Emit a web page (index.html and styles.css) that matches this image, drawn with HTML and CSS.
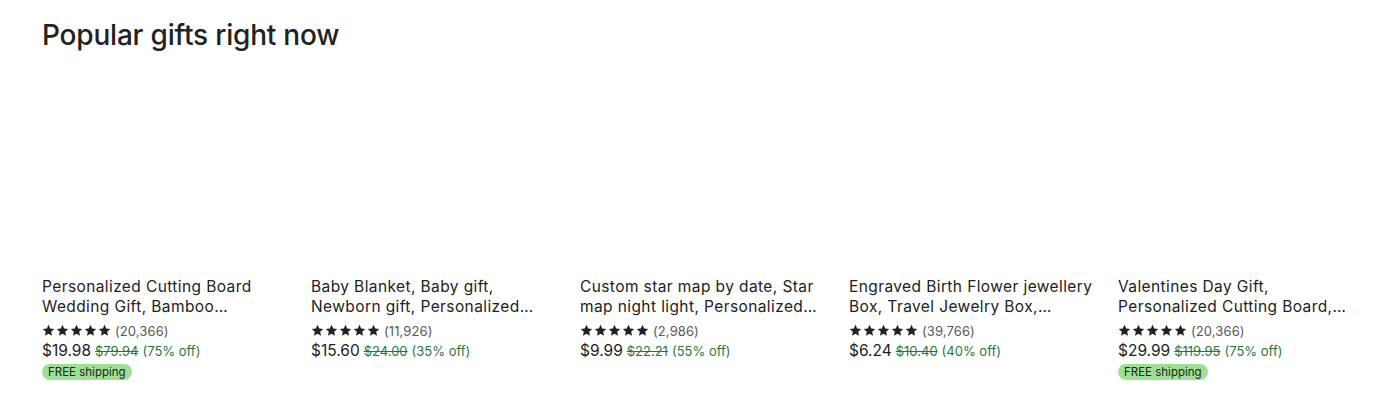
FILE: index.html
```html
<!DOCTYPE html>
<html>
<head>
<meta charset="utf-8">
<link rel="stylesheet" href="styles.css">
</head>
<body>
<section class="section">
  <h2 class="heading">Popular gifts right now</h2>
  <div class="grid">
    <div class="card">
      <div class="thumb"></div>
      <p class="title">Personalized Cutting Board Wedding Gift, Bamboo Charcuterie Board, Custom</p>
      <div class="rating"><span class="stars"><svg viewBox="0 0 24 24"><polygon points="12,1.5 15.1,8.3 22.5,9.1 17,14.1 18.5,21.5 12,17.8 5.5,21.5 7,14.1 1.5,9.1 8.9,8.3"/></svg><svg viewBox="0 0 24 24"><polygon points="12,1.5 15.1,8.3 22.5,9.1 17,14.1 18.5,21.5 12,17.8 5.5,21.5 7,14.1 1.5,9.1 8.9,8.3"/></svg><svg viewBox="0 0 24 24"><polygon points="12,1.5 15.1,8.3 22.5,9.1 17,14.1 18.5,21.5 12,17.8 5.5,21.5 7,14.1 1.5,9.1 8.9,8.3"/></svg><svg viewBox="0 0 24 24"><polygon points="12,1.5 15.1,8.3 22.5,9.1 17,14.1 18.5,21.5 12,17.8 5.5,21.5 7,14.1 1.5,9.1 8.9,8.3"/></svg><svg viewBox="0 0 24 24"><polygon points="12,1.5 15.1,8.3 22.5,9.1 17,14.1 18.5,21.5 12,17.8 5.5,21.5 7,14.1 1.5,9.1 8.9,8.3"/></svg></span><span class="count">(20,366)</span></div>
      <div class="price"><span class="now">$19.98</span><span class="was">$79.94</span><span class="off">(75% off)</span></div>
      <span class="badge">FREE shipping</span>
    </div>
    <div class="card">
      <div class="thumb"></div>
      <p class="title">Baby Blanket, Baby gift, Newborn gift, Personalized Baby Blanket</p>
      <div class="rating"><span class="stars"><svg viewBox="0 0 24 24"><polygon points="12,1.5 15.1,8.3 22.5,9.1 17,14.1 18.5,21.5 12,17.8 5.5,21.5 7,14.1 1.5,9.1 8.9,8.3"/></svg><svg viewBox="0 0 24 24"><polygon points="12,1.5 15.1,8.3 22.5,9.1 17,14.1 18.5,21.5 12,17.8 5.5,21.5 7,14.1 1.5,9.1 8.9,8.3"/></svg><svg viewBox="0 0 24 24"><polygon points="12,1.5 15.1,8.3 22.5,9.1 17,14.1 18.5,21.5 12,17.8 5.5,21.5 7,14.1 1.5,9.1 8.9,8.3"/></svg><svg viewBox="0 0 24 24"><polygon points="12,1.5 15.1,8.3 22.5,9.1 17,14.1 18.5,21.5 12,17.8 5.5,21.5 7,14.1 1.5,9.1 8.9,8.3"/></svg><svg viewBox="0 0 24 24"><polygon points="12,1.5 15.1,8.3 22.5,9.1 17,14.1 18.5,21.5 12,17.8 5.5,21.5 7,14.1 1.5,9.1 8.9,8.3"/></svg></span><span class="count">(11,926)</span></div>
      <div class="price"><span class="now">$15.60</span><span class="was">$24.00</span><span class="off">(35% off)</span></div>
    </div>
    <div class="card">
      <div class="thumb"></div>
      <p class="title">Custom star map by date, Star map night light, Personalized gift</p>
      <div class="rating"><span class="stars"><svg viewBox="0 0 24 24"><polygon points="12,1.5 15.1,8.3 22.5,9.1 17,14.1 18.5,21.5 12,17.8 5.5,21.5 7,14.1 1.5,9.1 8.9,8.3"/></svg><svg viewBox="0 0 24 24"><polygon points="12,1.5 15.1,8.3 22.5,9.1 17,14.1 18.5,21.5 12,17.8 5.5,21.5 7,14.1 1.5,9.1 8.9,8.3"/></svg><svg viewBox="0 0 24 24"><polygon points="12,1.5 15.1,8.3 22.5,9.1 17,14.1 18.5,21.5 12,17.8 5.5,21.5 7,14.1 1.5,9.1 8.9,8.3"/></svg><svg viewBox="0 0 24 24"><polygon points="12,1.5 15.1,8.3 22.5,9.1 17,14.1 18.5,21.5 12,17.8 5.5,21.5 7,14.1 1.5,9.1 8.9,8.3"/></svg><svg viewBox="0 0 24 24"><polygon points="12,1.5 15.1,8.3 22.5,9.1 17,14.1 18.5,21.5 12,17.8 5.5,21.5 7,14.1 1.5,9.1 8.9,8.3"/></svg></span><span class="count">(2,986)</span></div>
      <div class="price"><span class="now">$9.99</span><span class="was">$22.21</span><span class="off">(55% off)</span></div>
    </div>
    <div class="card">
      <div class="thumb"></div>
      <p class="title">Engraved Birth Flower jewellery Box, Travel Jewelry Box, Personalized</p>
      <div class="rating"><span class="stars"><svg viewBox="0 0 24 24"><polygon points="12,1.5 15.1,8.3 22.5,9.1 17,14.1 18.5,21.5 12,17.8 5.5,21.5 7,14.1 1.5,9.1 8.9,8.3"/></svg><svg viewBox="0 0 24 24"><polygon points="12,1.5 15.1,8.3 22.5,9.1 17,14.1 18.5,21.5 12,17.8 5.5,21.5 7,14.1 1.5,9.1 8.9,8.3"/></svg><svg viewBox="0 0 24 24"><polygon points="12,1.5 15.1,8.3 22.5,9.1 17,14.1 18.5,21.5 12,17.8 5.5,21.5 7,14.1 1.5,9.1 8.9,8.3"/></svg><svg viewBox="0 0 24 24"><polygon points="12,1.5 15.1,8.3 22.5,9.1 17,14.1 18.5,21.5 12,17.8 5.5,21.5 7,14.1 1.5,9.1 8.9,8.3"/></svg><svg viewBox="0 0 24 24"><polygon points="12,1.5 15.1,8.3 22.5,9.1 17,14.1 18.5,21.5 12,17.8 5.5,21.5 7,14.1 1.5,9.1 8.9,8.3"/></svg></span><span class="count">(39,766)</span></div>
      <div class="price"><span class="now">$6.24</span><span class="was">$10.40</span><span class="off">(40% off)</span></div>
    </div>
    <div class="card">
      <div class="thumb"></div>
      <p class="title">Valentines Day Gift, Personalized Cutting Board, Wedding Gift</p>
      <div class="rating"><span class="stars"><svg viewBox="0 0 24 24"><polygon points="12,1.5 15.1,8.3 22.5,9.1 17,14.1 18.5,21.5 12,17.8 5.5,21.5 7,14.1 1.5,9.1 8.9,8.3"/></svg><svg viewBox="0 0 24 24"><polygon points="12,1.5 15.1,8.3 22.5,9.1 17,14.1 18.5,21.5 12,17.8 5.5,21.5 7,14.1 1.5,9.1 8.9,8.3"/></svg><svg viewBox="0 0 24 24"><polygon points="12,1.5 15.1,8.3 22.5,9.1 17,14.1 18.5,21.5 12,17.8 5.5,21.5 7,14.1 1.5,9.1 8.9,8.3"/></svg><svg viewBox="0 0 24 24"><polygon points="12,1.5 15.1,8.3 22.5,9.1 17,14.1 18.5,21.5 12,17.8 5.5,21.5 7,14.1 1.5,9.1 8.9,8.3"/></svg><svg viewBox="0 0 24 24"><polygon points="12,1.5 15.1,8.3 22.5,9.1 17,14.1 18.5,21.5 12,17.8 5.5,21.5 7,14.1 1.5,9.1 8.9,8.3"/></svg></span><span class="count">(20,366)</span></div>
      <div class="price"><span class="now">$29.99</span><span class="was">$119.95</span><span class="off">(75% off)</span></div>
      <span class="badge">FREE shipping</span>
    </div>
  </div>
</section>
</body>
</html>
```

FILE: styles.css
```css
* { box-sizing: border-box; }
body {
  margin: 0;
  background: #fff;
  color: #222;
  font-family: Inter, "Noto Sans", sans-serif;
}
.section {
  padding: 18px 30px 0 42px;
}
.heading {
  margin: 0;
  font-size: 28px;
  line-height: 34px;
  font-weight: 500;
  color: #222;
  letter-spacing: -0.2px;
}
.grid {
  display: flex;
  gap: 24px;
}
.card {
  width: 245px;
  display: flex;
  flex-direction: column;
  align-items: flex-start;
}
.thumb {
  width: 100%;
  height: 225px;
}
.title {
  margin: 0;
  font-size: 15.5px;
  line-height: 20px;
  letter-spacing: 0.4px;
  color: #222;
  display: -webkit-box;
  -webkit-line-clamp: 2;
  -webkit-box-orient: vertical;
  overflow: hidden;
  width: 100%;
}
.rating {
  display: flex;
  align-items: center;
  height: 21px;
  margin-top: 3px;
}
.stars {
  display: flex;
  gap: 1px;
}
.stars svg {
  width: 13px;
  height: 13px;
  fill: #222;
  display: block;
}
.count {
  font-size: 13px;
  color: #595959;
  margin-left: 4px;
  letter-spacing: 0.1px;
}
.price {
  display: flex;
  align-items: baseline;
  height: 21px;
}
.now {
  font-size: 15.5px;
  color: #222;
}
.was {
  font-size: 13px;
  color: #1f7a3a;
  text-decoration: line-through;
  margin-left: 4px;
}
.off {
  font-size: 13px;
  color: #1f7a3a;
  margin-left: 4px;
}
.badge {
  margin-top: 2px;
  background: #9ee093;
  color: #222;
  font-size: 11.5px;
  line-height: 16px;
  padding: 0 6px;
  border-radius: 12px;
}
```
